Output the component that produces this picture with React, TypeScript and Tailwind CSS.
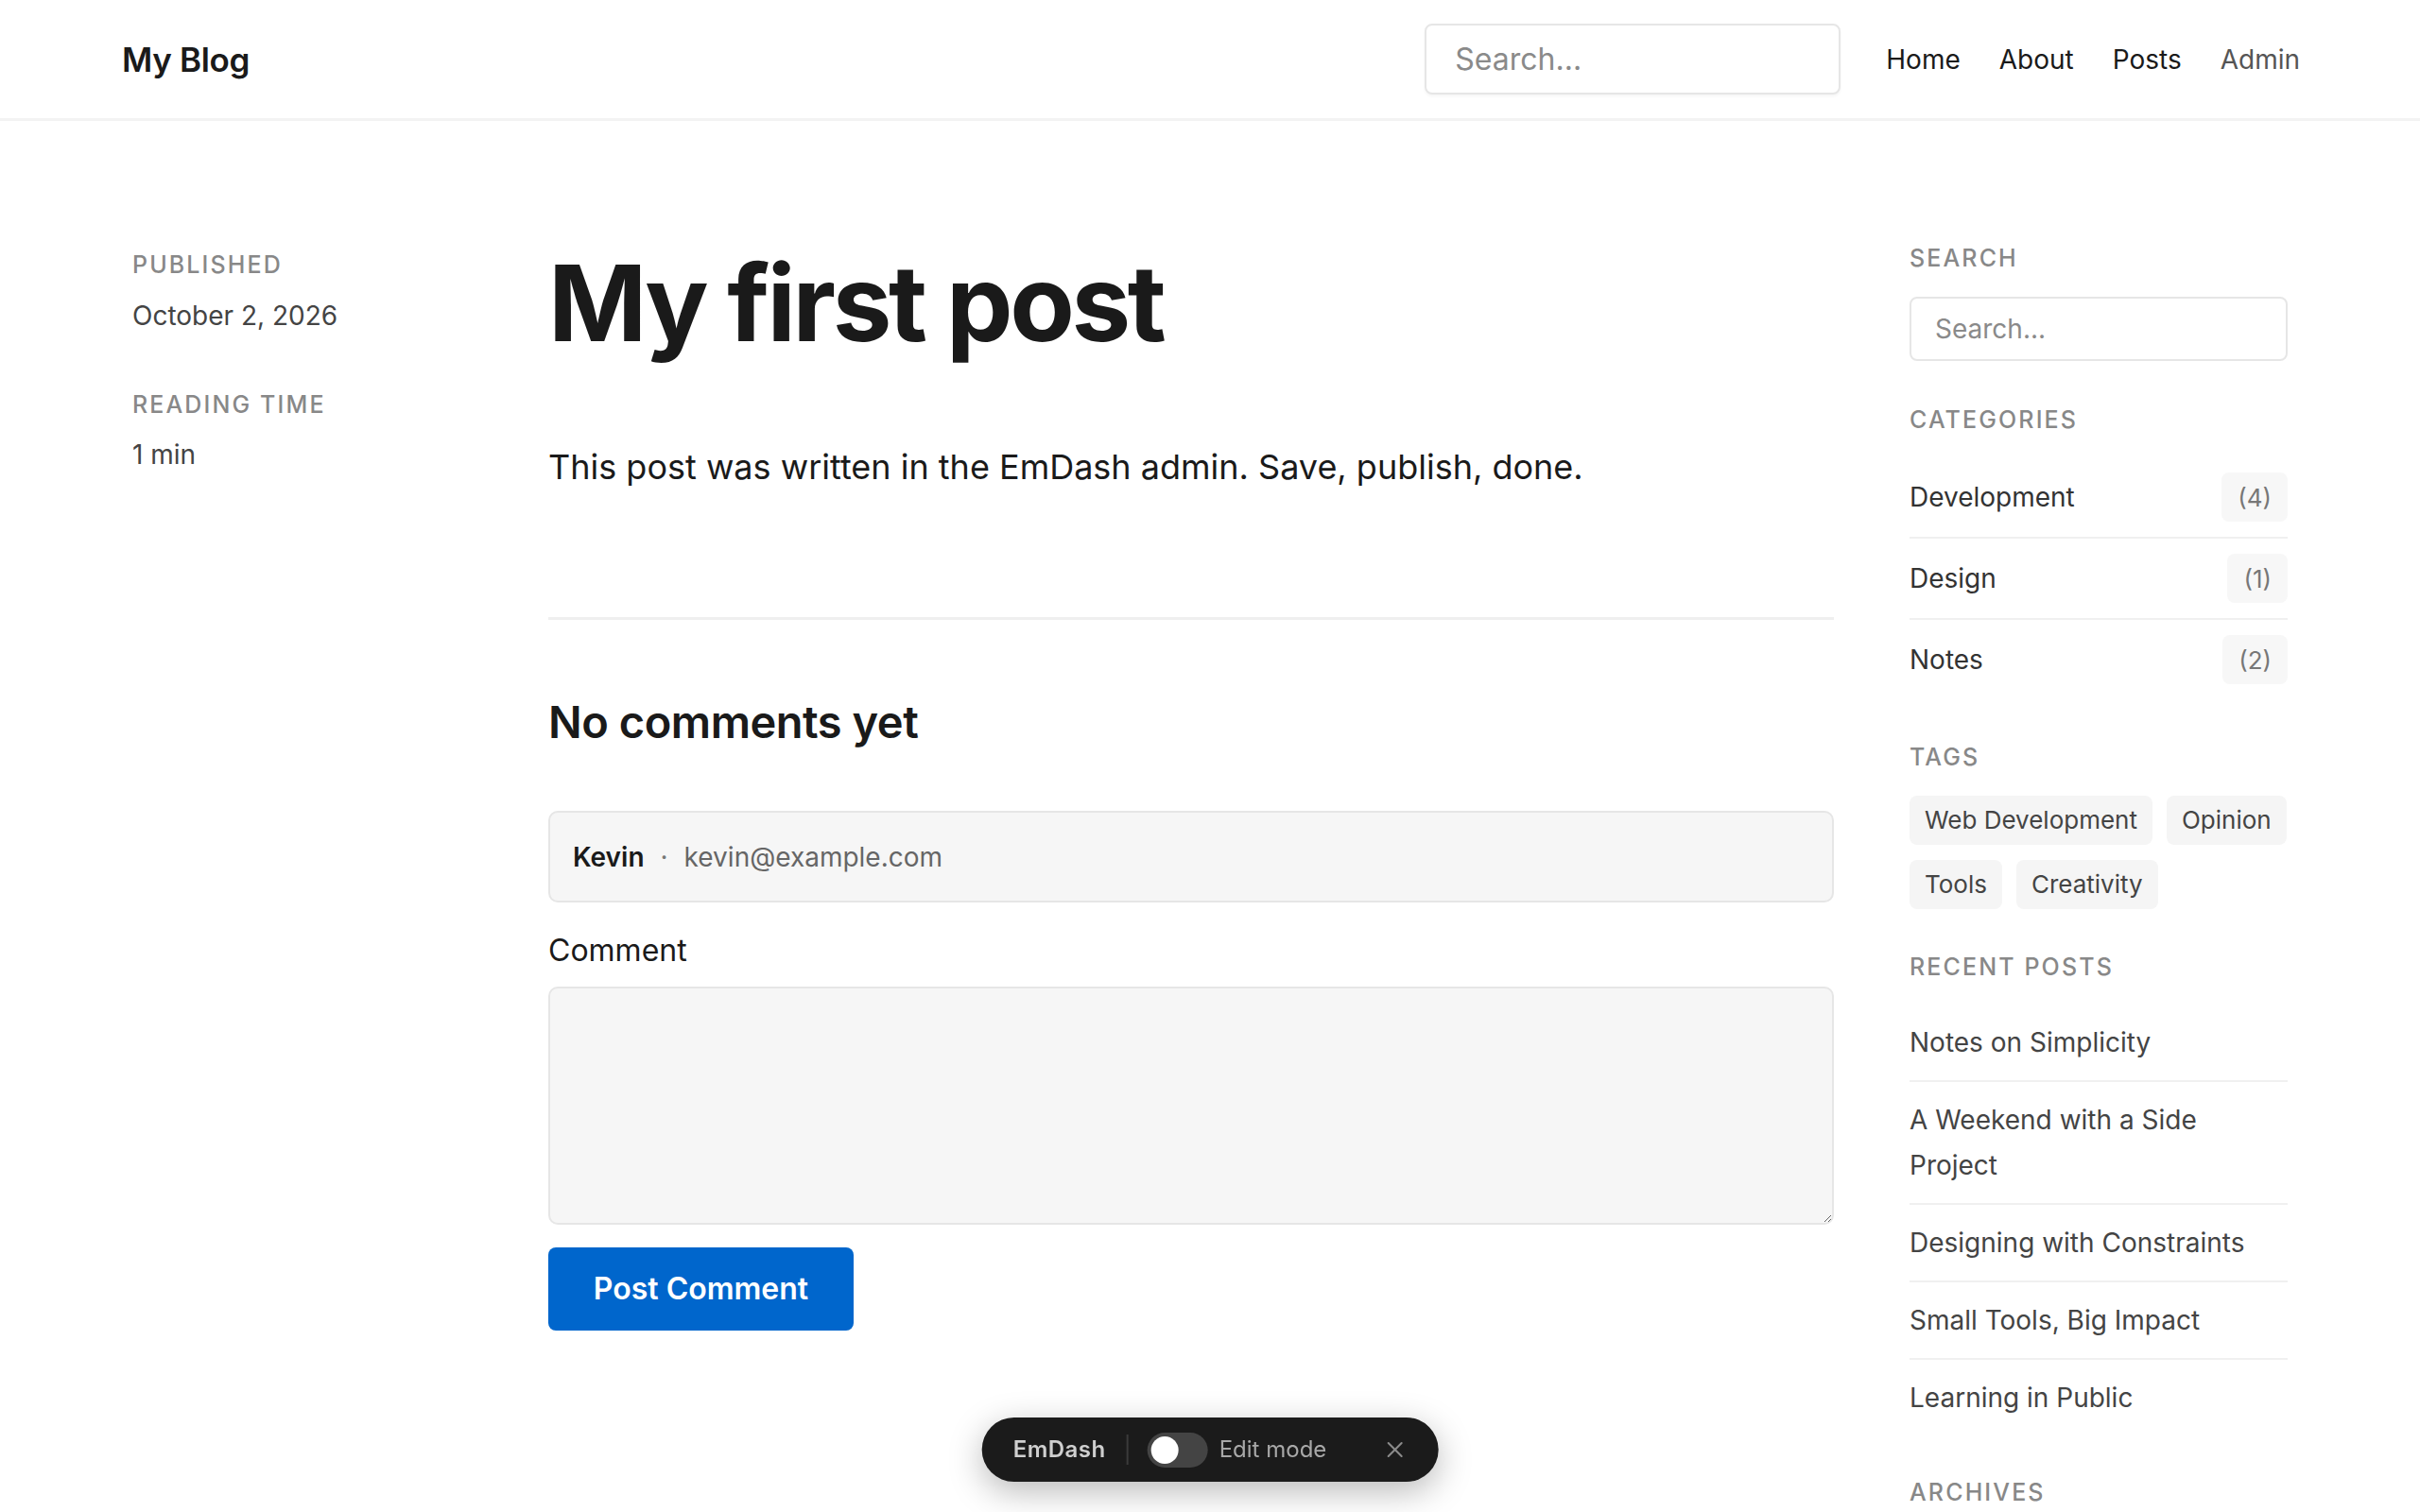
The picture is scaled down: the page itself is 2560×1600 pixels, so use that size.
import { X } from "lucide-react";

const categories = [
  { name: "Development", count: 4 },
  { name: "Design", count: 1 },
  { name: "Notes", count: 2 },
];

const tags = ["Web Development", "Opinion", "Tools", "Creativity"];

const recentPosts = [
  "Notes on Simplicity",
  "A Weekend with a Side Project",
  "Designing with Constraints",
  "Small Tools, Big Impact",
  "Learning in Public",
];

function SideHeading({ children }: { children: React.ReactNode }) {
  return (
    <h3 className="text-[25px] font-medium uppercase leading-[1.5] tracking-[0.085em] text-[#888]">
      {children}
    </h3>
  );
}

function MetaLabel({ children }: { children: React.ReactNode }) {
  return (
    <div className="text-[25px] font-medium uppercase leading-[1.5] tracking-[0.085em] text-[#888]">
      {children}
    </div>
  );
}

export default function App() {
  return (
    <div className="min-h-screen bg-white font-['Inter','Noto_Sans',sans-serif] text-[#1a1a1a]">
      {/* top bar */}
      <header className="border-b-[3px] border-[#f3f3f3]">
        <div className="flex h-[125px] items-center justify-between pl-[129px] pr-[127px]">
          <a className="mt-[2px] text-[35px] font-semibold tracking-[-0.01em] text-[#1a1a1a]">My Blog</a>
          <div className="flex items-center">
            <input
              type="text"
              placeholder="Search..."
              className="h-[75px] w-[440px] rounded-[8px] border-2 border-[#e6e6e6] bg-white px-[30px] text-[32px] shadow-[0_2px_3px_rgba(0,0,0,0.04)] outline-none placeholder:text-[#8a8a8a]"
            />
            <nav className="ml-[48px] flex gap-[41px] text-[28px]">
              <a className="text-[#1a1a1a]">Home</a>
              <a className="text-[#1a1a1a]">About</a>
              <a className="text-[#1a1a1a]">Posts</a>
              <a className="text-[#555]">Admin</a>
            </nav>
          </div>
        </div>
      </header>

      <main className="mx-auto grid w-[2280px] grid-cols-[360px_1360px_400px] gap-x-[80px] pt-[125px] pb-[200px]">
        {/* meta column */}
        <aside className="mt-[9px]">
          <MetaLabel>Published</MetaLabel>
          <div className="mt-[13px] text-[28px] leading-[1.5] text-[#444]">October 2, 2026</div>
          <div className="mt-[55px]">
            <MetaLabel>Reading time</MetaLabel>
          </div>
          <div className="mt-[13px] text-[28px] leading-[1.5] text-[#444]">1 min</div>
        </aside>

        {/* post */}
        <article className="mt-[6px]">
          <h1 className="text-[112px] font-bold leading-[1.1] tracking-[-0.03em] text-[#1a1a1a]">My first post</h1>
          <p className="mt-[85px] text-[36px] leading-[54px] text-[#1a1a1a]">
            This post was written in the EmDash admin. Save, publish, done.
          </p>
          <div className="mt-[132px] h-[3px] bg-[#efefef]" />

          <section className="mt-[80px]">
            <h2 className="text-[47px] font-semibold leading-[56px] tracking-[-0.01em]">No comments yet</h2>
            <form className="mt-[66px]" onSubmit={(e) => e.preventDefault()}>
              <div className="flex h-[97px] items-center rounded-[10px] border-2 border-[#e6e6e6] bg-[#f6f6f6] px-[24px] text-[28px]">
                <span className="font-semibold text-[#1a1a1a]">Kevin</span>
                <span className="mx-[17px] text-[#777]">·</span>
                <span className="text-[#666]">kevin@example.com</span>
              </div>
              <label className="mt-[30px] block text-[32px] leading-[42px] text-[#1a1a1a]">Comment</label>
              <textarea className="mt-[17px] block h-[252px] w-full resize-y rounded-[10px] border-2 border-[#e6e6e6] bg-[#f6f6f6] p-[20px] text-[28px] outline-none" />
              <button
                type="submit"
                className="mt-[24px] h-[88px] w-[323px] rounded-[8px] bg-[#0066cc] text-[32px] font-semibold text-white"
              >
                Post Comment
              </button>
            </form>
          </section>
        </article>

        {/* sidebar */}
        <aside className="mt-[2px]">
          <section>
            <SideHeading>Search</SideHeading>
            <input
              type="text"
              placeholder="Search..."
              className="mt-[21px] h-[68px] w-full rounded-[8px] border-2 border-[#e6e6e6] bg-white px-[25px] text-[28px] outline-none placeholder:text-[#8a8a8a]"
            />
          </section>

          <section className="mt-[44px]">
            <SideHeading>Categories</SideHeading>
            <ul className="mt-[21px]">
              {categories.map((c, i) => (
                <li
                  key={c.name}
                  className={`flex items-center justify-between py-[16px] ${i < categories.length - 1 ? "border-b-2 border-[#f0f0f0]" : ""}`}
                >
                  <span className="text-[28px] text-[#333]">{c.name}</span>
                  <span className="flex h-[52px] items-center rounded-[8px] bg-[#f7f7f7] px-[17px] text-[26px] text-[#777]">
                    ({c.count})
                  </span>
                </li>
              ))}
            </ul>
          </section>

          <section className="mt-[43px]">
            <SideHeading>Tags</SideHeading>
            <div className="mt-[21px] flex flex-wrap gap-x-[15px] gap-y-[16px]">
              {tags.map((t) => (
                <span key={t} className="flex h-[52px] items-center rounded-[8px] bg-[#f5f5f5] px-[16px] text-[26px] text-[#444]">
                  {t}
                </span>
              ))}
            </div>
          </section>

          <section className="mt-[43px]">
            <SideHeading>Recent posts</SideHeading>
            <ul className="mt-[21px]">
              {recentPosts.map((p, i) => (
                <li
                  key={p}
                  className={`py-[16px] text-[28px] leading-[48px] text-[#444] ${i < recentPosts.length - 1 ? "border-b-2 border-[#f0f0f0]" : ""}`}
                >
                  {p}
                </li>
              ))}
            </ul>
          </section>

          <section className="mt-[42px]">
            <SideHeading>Archives</SideHeading>
            <ul className="mt-[21px]">
              <li className="py-[16px] text-[28px] leading-[48px] text-[#444]">October 2026</li>
            </ul>
          </section>
        </aside>
      </main>

      {/* floating toolbar */}
      <div className="fixed bottom-[32px] left-1/2 flex h-[68px] -translate-x-1/2 items-center rounded-full bg-[#1b1b1b] pl-[33px] pr-[32px] shadow-[0_10px_36px_rgba(0,0,0,0.28)]">
        <span className="text-[24px] font-semibold tracking-[0.02em] text-[#cfcfcf]">EmDash</span>
        <span className="ml-[22px] h-[32px] w-[2px] bg-[#3a3a3a]" />
        <span className="ml-[20px] flex h-[37px] w-[64px] items-center rounded-full bg-[#444] px-[4px]">
          <span className="h-[29px] w-[29px] rounded-full bg-white" />
        </span>
        <span className="ml-[12px] text-[24px] text-[#a8a8a8]">Edit mode</span>
        <X className="ml-[58px] h-[28px] w-[28px] text-[#8a8a8a]" strokeWidth={1.75} />
      </div>
    </div>
  );
}
